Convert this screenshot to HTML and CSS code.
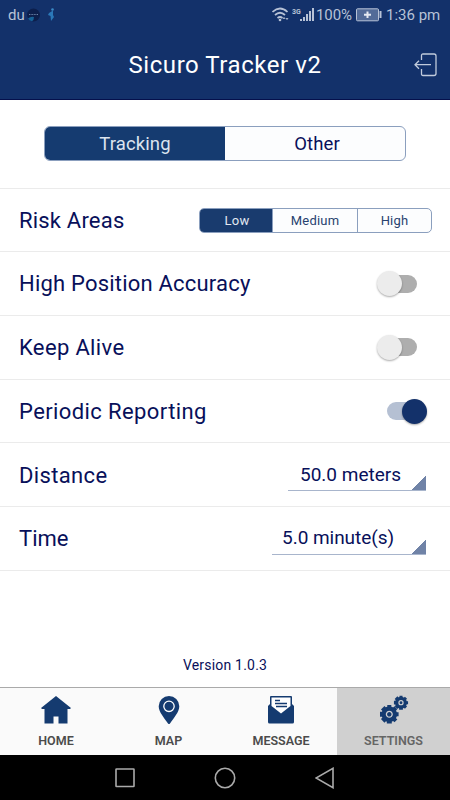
FILE: index.html
```html
<!DOCTYPE html>
<html lang="en">
<head>
<meta charset="utf-8">
<title>Sicuro Tracker v2</title>
<link rel="stylesheet" href="styles.css">
</head>
<body>
<div class="app">
  <header class="header">
    <div class="status">
      <span class="carrier">du</span>
      <svg class="notices" width="30" height="16" viewBox="0 0 30 16"><circle cx="6.5" cy="8" r="6.5" fill="#0d1f4c"/><path d="M1 11.500Q4 9 7 10Q7 13 5 14.300Q2 13.500 1 11.500Z" fill="#176398"/><path d="M2 7.500h9" stroke="#6c83a8" stroke-dasharray="1 .6"/><path d="M22 6L26 3.500L26 8L27 10L24 14L23.500 9L21 8Z" fill="#2b78b8"/><circle cx="25.500" cy="2.500" r="1.300" fill="#3b8ac6"/></svg>
      <svg class="signal" width="44" height="16" viewBox="0 0 44 16" fill="none" stroke="#b7c2d6"><path d="M0.500 5Q8-2 15.500 5M3 8Q8 3.500 13 8M5.500 11Q8 9 10.500 11" stroke-width="1.700"/><circle cx="8" cy="13" r="1.300" fill="#b7c2d6" stroke="none"/><path d="M11 12l1-1.500 1 1.500M14 11l1 1.500 1-1.500"/><path d="M29 14v-2M32 14v-4M35 14V7M38 14V4M41 14V1" stroke-width="2"/><text x="20" y="7" class="network">3G</text></svg>
      <span class="percent">100%</span>
      <svg class="battery" width="26" height="14" viewBox="0 0 26 14"><rect x=".5" y=".8" width="22" height="12" rx="1" fill="#526b98" stroke="#b7c2d6"/><path d="M24.500 3v7" stroke="#b7c2d6" stroke-width="2"/><path d="M8 6.800h7M11.500 3.500v6.500" stroke="#e5eaf2" stroke-width="2"/></svg>
      <span class="clock">1:36 pm</span>
    </div>
    <div class="titlebar">
      <h1>Sicuro Tracker v2</h1>
      <svg class="logout" width="24" height="24" viewBox="0 0 24 24" fill="none" stroke="#c1cbdc" stroke-width="1.300"><path d="M7.500 7V2.500Q7.500 1 9 1H20Q22 1 22 3V20.500Q22 22.500 20 22.500H9Q7.500 22.500 7.500 21V16M17 11.700H1M5 7.700L1 11.700L5 15.700"/></svg>
    </div>
  </header>
  <main>
    <div class="tabs-row"><div class="tabs"><span class="selected">Tracking</span><span>Other</span></div></div>
    <section class="row"><span class="label risk">Risk Areas</span><div class="levels"><span class="selected">Low</span><span>Medium</span><span>High</span></div></section>
    <section class="row"><span class="label accuracy">High Position Accuracy</span><i class="switch"></i></section>
    <section class="row"><span class="label keep">Keep Alive</span><i class="switch"></i></section>
    <section class="row"><span class="label periodic">Periodic Reporting</span><i class="switch on"></i></section>
    <section class="row"><span class="label distance">Distance</span><div class="select meters">50.0 meters</div></section>
    <section class="row"><span class="label time">Time</span><div class="select minutes">5.0 minute(s)</div></section>
    <p class="version">Version 1.0.3</p>
  </main>
  <nav class="tabbar">
    <div><svg width="30" height="30" viewBox="0 0 30 30"><path d="M15 1L30 13L29 14H26.500V28.500H17.500V21.500H12.500V28.500H3.500V14H1L0 13Z"/></svg><span>HOME</span></div>
    <div><svg width="30" height="30" viewBox="0 0 30 30"><path d="M15 1A10.300 10.300 0 0 0 4.700 11.300C4.700 17 10.500 23.500 14 28.500Q15 29.700 16 28.500C19.500 23.500 25.300 17 25.300 11.300A10.300 10.300 0 0 0 15 1Z"/><circle cx="15" cy="11.300" r="5.200" fill="none" stroke="#fff" stroke-width="1.300"/></svg><span>MAP</span></div>
    <div><svg width="30" height="30" viewBox="0 0 30 30"><path d="M2 11L4 9V2Q4 1 5 1H25Q26 1 26 2V9L28 11V27Q28 28.500 26.500 28.500H3.500Q2 28.500 2 27Z"/><path d="M5.500 2.500H24.500V11L15 18.500L5.500 11Z" fill="#fff"/><path d="M9 5.500H14M9 8.500H21M10 11.500H21" stroke="#153b70" stroke-width="1.300"/></svg><span>MESSAGE</span></div>
    <div class="current"><svg width="30" height="30" viewBox="0 0 30 30"><g transform="translate(10.300 19.300)"><circle r="7.800"/><path d="M-2-9.300H2L2.500 9.300H-2.500Z"/><path d="M-2-9.300H2L2.500 9.300H-2.500Z" transform="rotate(45)"/><path d="M-2-9.300H2L2.500 9.300H-2.500Z" transform="rotate(90)"/><path d="M-2-9.300H2L2.500 9.300H-2.500Z" transform="rotate(135)"/><circle r="2.900" stroke="#d0d0d0" stroke-width="1.300"/></g><g transform="translate(22 7.700) scale(.76)"><circle r="7.800"/><path d="M-2-9.300H2L2.500 9.300H-2.500Z"/><path d="M-2-9.300H2L2.500 9.300H-2.500Z" transform="rotate(45)"/><path d="M-2-9.300H2L2.500 9.300H-2.500Z" transform="rotate(90)"/><path d="M-2-9.300H2L2.500 9.300H-2.500Z" transform="rotate(135)"/><circle r="2.700" stroke="#d0d0d0" stroke-width="1.600"/></g></svg><span>SETTINGS</span></div>
  </nav>
  <footer class="system">
    <svg width="20" height="20" viewBox="0 0 20 20"><rect x="1" y="1" width="18" height="17.500" rx=".5"/></svg>
    <svg width="22" height="22" viewBox="0 0 22 22"><circle cx="11" cy="11" r="9.700"/></svg>
    <svg width="20" height="22" viewBox="0 0 20 22"><path d="M18 1.300V20.700L1 11Z"/></svg>
  </footer>
</div>
</body>
</html>
```
FILE: styles.css
```css
* { box-sizing: border-box; }
body { margin: 0; background: #fff; font-family: Roboto, "Liberation Sans", sans-serif; color: #08105a; }
.app { width: 450px; height: 800px; display: flex; flex-direction: column; overflow: hidden; }
svg { display: block; flex: none; }
.header { height: 100px; flex: none; background: #13316a; border-bottom: 1px solid #05104c; }
.status { height: 30px; display: flex; align-items: center; padding: 0 11px 0 8px; color: #b7c2d6; font-size: 15px; white-space: nowrap; }
.carrier { width: 19px; }
.signal { margin-left: auto; }
.network { font: bold 7px Roboto, sans-serif; fill: #b7c2d6; stroke: none; }
.percent { width: 40px; letter-spacing: -.1px; }
.battery { margin-right: 4px; }
.clock { width: 53px; }
.titlebar { height: 69px; display: flex; align-items: center; }
h1 { flex: 1; margin: 0; padding-left: 50px; text-align: center; font-size: 24px; line-height: 30px; font-weight: 400; color: #fff; letter-spacing: .55px; white-space: nowrap; }
.logout { margin: 0 12px 0 14px; }
main { height: 587px; flex: none; background: #fff; }
.tabs-row { height: 88.700px; padding: 26px 44px 0; border-bottom: 1px solid #ebebeb; }
.tabs, .levels { display: flex; overflow: hidden; border: 1px solid #8b9fbe; background: #fcfdfe; }
.tabs { height: 35px; border-radius: 6px; font-size: 18.500px; }
.tabs span { flex: 1; display: flex; align-items: center; justify-content: center; padding-left: 4px; letter-spacing: .1px; }
.tabs .selected { flex: none; width: 180px; background: #153b70; color: #dce4ef; padding-left: 0; }
.row { height: 63.700px; padding: 0 18px 0 19px; display: flex; align-items: center; border-bottom: 1px solid #ebebeb; }
.label { font-size: 22px; flex: 1; white-space: nowrap; }
.risk { letter-spacing: .2px; }
.accuracy { letter-spacing: .2px; }
.keep { letter-spacing: .35px; }
.periodic { letter-spacing: .4px; }
.distance { letter-spacing: .35px; padding-top: 1px; }
.levels { width: 233px; height: 25px; border-radius: 5px; font-size: 13px; color: #28426f; letter-spacing: .2px; }
.levels span { display: flex; align-items: center; justify-content: center; width: 73px; border-right: 1px solid #8b9fbe; }
.levels .selected { background: #193b6e; color: #e2e8f1; padding-left: 2px; }
.levels span:nth-child(2) { width: 85px; }
.levels span:nth-child(3) { border: 0; }
.switch { display: flex; align-items: center; width: 30px; height: 18px; margin-right: 15px; border-radius: 9px; background: #aeaeae; }
.switch::before { content: ""; flex: none; width: 25px; height: 25px; margin-left: -10px; border-radius: 50%; background: #ececec; box-shadow: 0 1px 2px #0005; }
.switch.on { background: #b5c0d3; }
.switch.on::before { margin-left: 15px; background: #13316a; }
.select { display: flex; justify-content: flex-end; align-items: center; height: 33px; padding: 0 25px 0 0; margin-right: 6px; border-bottom: 1px solid #a8b5cc; font-size: 19px; background: linear-gradient(135deg, transparent 50%, #7083a7 51%) right bottom / 15px 15px no-repeat; white-space: nowrap; }
.meters { width: 138px; }
.minutes { width: 154px; padding-right: 32px; letter-spacing: -.05px; }
.version { margin: 84px 0 0; text-align: center; font-size: 14px; line-height: 20px; letter-spacing: .2px; }
.tabbar { height: 68px; flex: none; display: grid; grid-template-columns: 112px 113px 112px 113px; background: #fafafa; border-top: 1px solid #aaa; }
.tabbar div { display: flex; flex-direction: column; align-items: center; padding-top: 7px; color: #4b4b4b; font-size: 12.500px; font-weight: 600; line-height: 18px; }
.tabbar svg { fill: #153b70; margin-bottom: 7px; }
.tabbar .current { background: #d0d0d0; color: #656565; }
.system { height: 45px; flex: none; background: #000; display: flex; align-items: center; justify-content: center; gap: 79px; }
.system svg { fill: none; stroke: #aaa; stroke-width: 1.600; }
```
